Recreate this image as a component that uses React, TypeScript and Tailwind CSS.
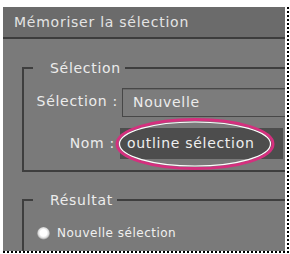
import React from "react";

export default function App() {
  const font = { fontFamily: '"DejaVu Sans", Verdana, sans-serif' };
  return (
    <div className="relative w-[290px] h-[254px] bg-white overflow-hidden" style={font}>
      <div className="flex pt-[7px] pl-[3px]">
        <div className="flex flex-col">
          <div className="relative w-[282px] h-[244px] bg-[#7a7a7a] overflow-hidden flex flex-col">
            <div className="h-[30px] shrink-0 bg-[#6b6b6b] flex items-center pl-[11px] text-[14px] tracking-[0.75px] text-[#e4e4e4]">
              Mémoriser la sélection
            </div>
            <div className="h-[2px] shrink-0 bg-[#3c3c3c]" />
            <fieldset className="ml-[19px] mt-[21px] w-[320px] h-[112px] shrink-0 border-2 border-[#3e3e3e] p-0 m-0">
              <legend className="ml-[9px] pl-[17px] pr-[4px] text-[14px] leading-[16px] tracking-[0.7px] text-[#ececec]">
                Sélection
              </legend>
              <div className="flex items-center mt-[12px]">
                <span className="w-[94px] text-right text-[14px] tracking-[0.7px] text-[#ececec] shrink-0 -translate-y-[1px]">Sélection :</span>
                <div className="ml-[4px] h-[29px] flex-1 border border-[#474747] bg-[#7c7c7c] shadow-[inset_0_1px_0_#6a6a6a] flex items-center pl-[10px] text-[14px] tracking-[0.7px] text-[#ececec]">
                  Nouvelle
                </div>
              </div>
              <div className="flex items-center mt-[11px]">
                <span className="w-[91px] text-right text-[14px] tracking-[0.7px] text-[#ececec] shrink-0">Nom :</span>
                <div className="ml-[5px] h-[31px] w-[163px] bg-[#4d4d4d] flex items-center pl-[7px] text-[14px] tracking-[0.7px] text-[#efefef]">
                  outline sélection
                </div>
              </div>
            </fieldset>
            <fieldset className="ml-[19px] mt-[20px] w-[320px] h-[80px] shrink-0 border-2 border-[#3e3e3e] p-0 m-0">
              <legend className="ml-[9px] pl-[17px] pr-[4px] text-[14px] leading-[16px] tracking-[0.7px] text-[#ececec]">
                Résultat
              </legend>
              <div className="flex items-center mt-[16px] ml-[13px]">
                <span className="w-[13px] h-[13px] rounded-full bg-[radial-gradient(circle_at_50%_45%,#ffffff_0,#ffffff_35%,#d8d8d8_55%,#505050_80%,#383838_100%)] shrink-0" />
                <span className="ml-[7px] text-[12px] tracking-[0.5px] text-[#f0f0f0]">Nouvelle sélection</span>
              </div>
            </fieldset>
            <svg className="absolute left-[111px] top-[111px]" width="162" height="54" viewBox="0 0 162 54">
              <ellipse cx="81" cy="26" rx="78" ry="24.5" fill="none" stroke="#d4307e" strokeWidth="3" />
              <ellipse cx="81" cy="26" rx="75.5" ry="22" fill="none" stroke="#ffffff" strokeWidth="1.2" />
            </svg>
          </div>
          <div className="h-[2px] w-[284px] bg-[repeating-linear-gradient(to_right,#000_0_2px,#fff_2px_4px)]" />
        </div>
        <div className="w-[2px] h-[246px] bg-[repeating-linear-gradient(to_bottom,#000_0_2px,#fff_2px_4px)]" />
      </div>
    </div>
  );
}
